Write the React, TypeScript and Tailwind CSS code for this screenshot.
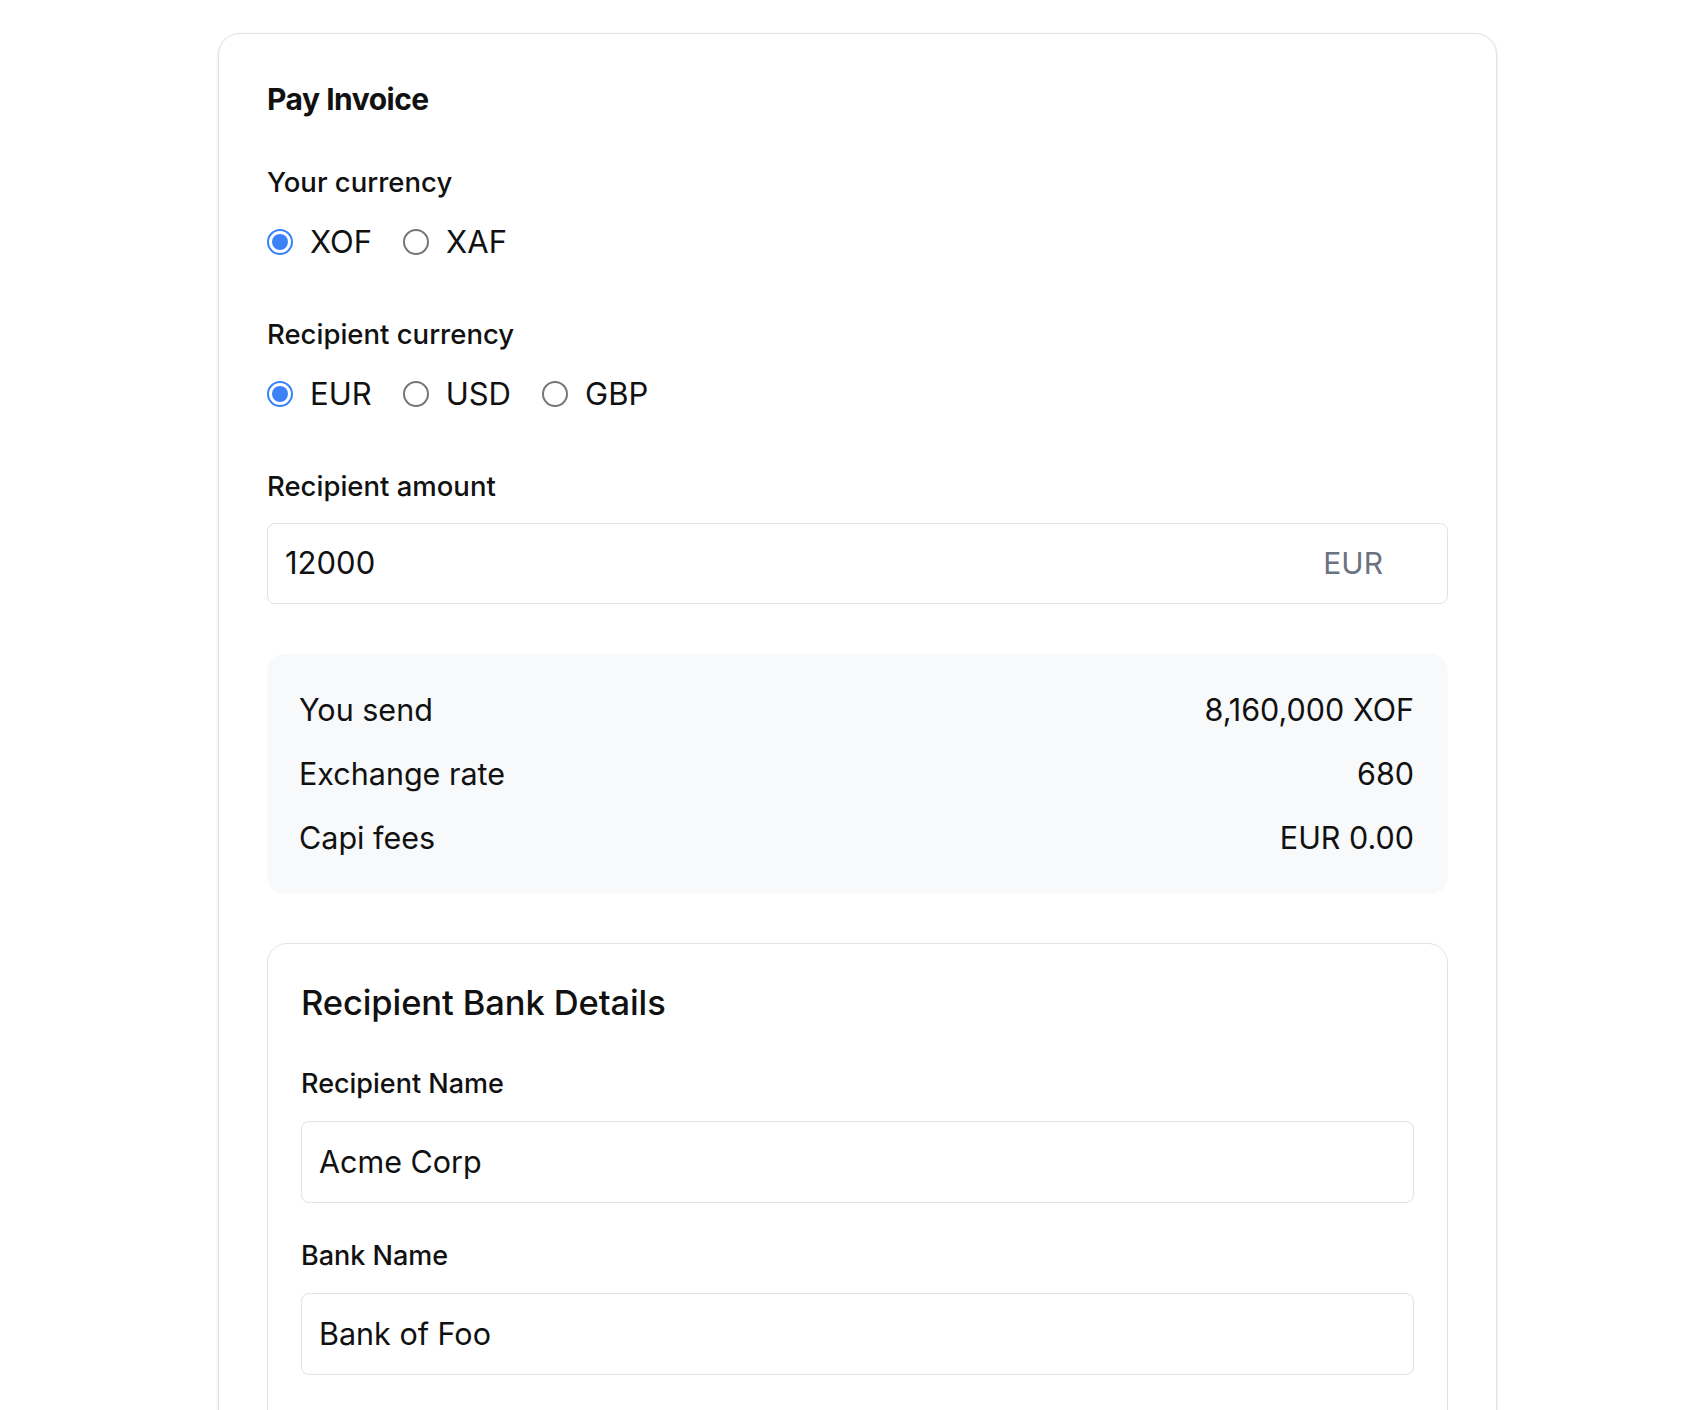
import React from "react";

function Radio({ label, checked }: { label: string; checked?: boolean }) {
  return (
    <label className="flex items-center gap-[17px]">
      {checked ? (
        <span className="flex h-[26px] w-[26px] items-center justify-center rounded-full border-[2px] border-[#3b82f6] bg-white">
          <span className="h-[16px] w-[16px] rounded-full bg-[#3b82f6]" />
        </span>
      ) : (
        <span className="h-[26px] w-[26px] rounded-full border-[2px] border-[#767676] bg-white" />
      )}
      <span className="text-[31px] leading-[40px] text-[#111]">{label}</span>
    </label>
  );
}

function Field({ label, value, first }: { label: string; value: string; first?: boolean }) {
  return (
    <div className={first ? "mt-[41px]" : "mt-[33px]"}>
      <div className="text-[27px] font-medium leading-[40px] text-[#111]">{label}</div>
      <div className="mt-[17px] flex h-[82px] items-center rounded-[8px] border border-[#e2e2e2] bg-white pl-[17px] text-[30.5px] text-[#111]">
        {value}
      </div>
    </div>
  );
}

export default function App() {
  return (
    <div
      className="min-h-screen bg-white pt-[33px]"
      style={{ fontFamily: "Inter, 'Noto Sans', sans-serif" }}
    >
      <div className="ml-[218px] w-[1279px] rounded-[22px] border border-[#e3e3e3] bg-white px-[48px] pb-[80px] pt-[45px] shadow-sm">
        <h1 className="text-[30px] font-bold leading-[40px] tracking-[-0.5px] text-[#111]">Pay Invoice</h1>

        <div className="mt-[43px] text-[27.5px] font-medium leading-[40px] text-[#111]">Your currency</div>
        <div className="mt-[20px] flex h-[40px] items-center gap-[31px]">
          <Radio label="XOF" checked />
          <Radio label="XAF" />
        </div>

        <div className="mt-[52px] text-[27.5px] font-medium leading-[40px] text-[#111]">Recipient currency</div>
        <div className="mt-[20px] flex h-[40px] items-center gap-[31px]">
          <Radio label="EUR" checked />
          <Radio label="USD" />
          <Radio label="GBP" />
        </div>

        <div className="mt-[52px] text-[27.5px] font-medium leading-[40px] text-[#111]">Recipient amount</div>
        <div className="mt-[17px] flex h-[81px] items-center justify-between rounded-[8px] border border-[#e2e2e2] bg-white pl-[17px] pr-[64px]">
          <span className="text-[31px] text-[#111]">12000</span>
          <span className="text-[30px] text-[#6b7280]">EUR</span>
        </div>

        <div className="mt-[50px] flex flex-col gap-[16px] rounded-[18px] bg-[#f8f9fb] py-[32px] pl-[32px] pr-[34px] text-[30.5px] text-[#111]">
          <div className="flex h-[48px] items-center justify-between">
            <span>You send</span>
            <span>8,160,000 XOF</span>
          </div>
          <div className="flex h-[48px] items-center justify-between">
            <span>Exchange rate</span>
            <span>680</span>
          </div>
          <div className="flex h-[48px] items-center justify-between">
            <span>Capi fees</span>
            <span>EUR 0.00</span>
          </div>
        </div>

        <div className="mt-[49px] rounded-[20px] border border-[#e3e3e3] bg-white px-[33px] pb-[160px] pt-[39px]">
          <h2 className="text-[34.5px] font-medium leading-[40px] tracking-[-0.1px] text-[#111]">Recipient Bank Details</h2>
          <Field label="Recipient Name" value="Acme Corp" first />
          <Field label="Bank Name" value="Bank of Foo" />
        </div>
      </div>
    </div>
  );
}
